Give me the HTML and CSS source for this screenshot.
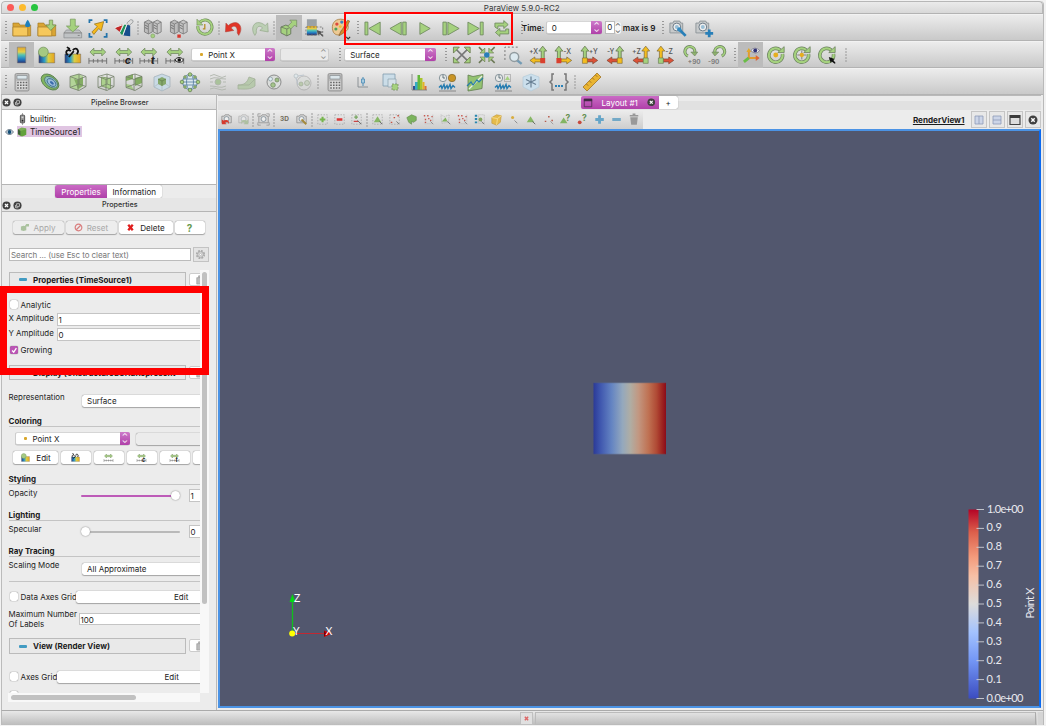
FILE: index.html
```html
<!DOCTYPE html>
<html lang="en">
<head>
<meta charset="utf-8">
<title>ParaView 5.9.0-RC2</title>
<link rel="stylesheet" href="styles.css">
</head>
<body>
<svg class="paints" aria-hidden="true">
<defs>
<linearGradient id="rain" x1="0" y1="0" x2="0" y2="1"><stop offset="0" stop-color="#e0a32a"/><stop offset=".3" stop-color="#e5cf48"/><stop offset=".5" stop-color="#54c3b4"/><stop offset=".75" stop-color="#237fc4"/><stop offset="1" stop-color="#273778"/></linearGradient>
<linearGradient id="rainh" x1="0" y1="0" x2="1" y2="0"><stop offset="0" stop-color="#263b80"/><stop offset=".35" stop-color="#2c9ec9"/><stop offset=".6" stop-color="#d9cf45"/><stop offset="1" stop-color="#e8a21d"/></linearGradient>
</defs>
</svg>
<svg class="defs" aria-hidden="true">
<symbol id="open" viewBox="0 0 26 26"><path d="M4 8h6l1 2h11v11H4z" fill="#d9a534" stroke="#a57b28" stroke-width=".7"/><path d="M4 21V12h15v9z" fill="#f6c85c" stroke="#a57b28" stroke-width=".7"/><path d="M19 4.500c4 5.500 3 7.500 0 7.500s-4-2 0-7.500z" fill="#1e80bd"/></symbol>
<symbol id="load" viewBox="0 0 26 26"><path d="M4 8h6l1 2h11v11H4z" fill="#d9a534" stroke="#a57b28" stroke-width=".7"/><path d="M4 21V12h14v9z" fill="#f6c85c" stroke="#a57b28" stroke-width=".7"/><path d="M15.500 5h3.500v5h3.500L17 15.500 12 10h3.500z" fill="#a5d17e" stroke="#61803f" stroke-width=".6"/></symbol>
<symbol id="save" viewBox="0 0 26 26"><path d="M6.500 15h13l2.500 3v5H4v-5z" fill="#bfc2c4" stroke="#85898b" stroke-width=".7"/><path d="M4 18h18M18 20.600h2" stroke="#777" stroke-width=".8"/><path d="M10.500 4h5v7h4L13 17 6.500 11h4z" fill="#a5d17e" stroke="#719656" stroke-width=".7"/></symbol>
<symbol id="extract" viewBox="0 0 26 26"><path d="M4.500 8V5h3M19 5h3v3M22 18v4h-3M7.500 22h-3v-4" fill="none" stroke="#2373aa" stroke-width="1.800"/><path d="M7 17l5.500-5.500-3-2.500 9.500-2.500L16.500 16 14 13.500 9 19.500z" fill="#f6b91c" stroke="#8f6d17" stroke-width=".7"/></symbol>
<symbol id="catalyst" viewBox="0 0 26 26"><path d="M4 13l8-4-3 8z" fill="#c22727"/><path d="M13 9l2.500 1-4 10.500-2.500-3z" fill="#1f9358"/><path d="M16 10h3.500v11.500l-7-1z" fill="#174e8c"/><path d="M4 12.500l14-5 2 3M9 17.500l4-8M12 20.500l4-10.500" fill="none" stroke="#eee" stroke-width="1"/><path d="M16 8l4-3.500 2 .500.500 2-4 3.500z" fill="#ddd" stroke="#85898b" stroke-width=".7"/></symbol>
<symbol id="rack" viewBox="0 0 26 26"><path d="M4.500 7l4-2 4 2v10l-4 2-4-2z" fill="#bcbcbc" stroke="#747474" stroke-width=".8"/><path d="M13.500 7l4-2 4 2v10l-4 2-4-2z" fill="#c6c6c6" stroke="#747474" stroke-width=".8"/><path d="M4.500 7l4 2 4-2M13.500 7l4 2 4-2M8.500 9v10M17.500 9v10" fill="none" stroke="#777" stroke-width=".8"/><path d="M5 10l3 1.500M5 12.500l3 1.500M14 10l3 1.500M14 12.500l3 1.500" stroke="#555" stroke-width=".7"/></symbol>
<symbol id="connect" viewBox="0 0 26 26"><use href="#rack"/><circle cx="13" cy="21" r="2" fill="#a5d17e" stroke="#789a60" stroke-width=".6"/></symbol>
<symbol id="disconnect" viewBox="0 0 26 26"><use href="#rack"/><path d="M11.500 19.500h3.500V23h-3.500z" fill="#d7382e"/></symbol>
<symbol id="reload" viewBox="0 0 26 26"><path d="M8 7a7.200 7.200 0 1 1-2 4" fill="none" stroke="#6f8c59" stroke-width="3"/><path d="M8 7a7.200 7.200 0 1 1-2 4" fill="none" stroke="#a5d17e" stroke-width="1.800"/><path d="M5 4v6h6z" fill="#a5d17e" stroke="#6f8c59" stroke-width=".6"/><path d="M13 9v5h-2" fill="none" stroke="#b58d24" stroke-width="1.300"/></symbol>
<symbol id="undo" viewBox="0 0 26 26"><path d="M5 8l-.500 9 8.500-1.500-2.800-2.500c3-3.500 7-1.500 6.300 5l1.500 2.500C24 12 17 2.500 7.500 10.500z" fill="#e13427" stroke="#a6433b" stroke-width=".5"/></symbol>
<symbol id="redo" viewBox="0 0 26 26"><path d="M21 8l.500 9-8.500-1.500 2.800-2.500c-3-3.500-7-1.500-6.300 5L8 20.500C2 12 9 2.500 18.500 10.500z" fill="#bccfb4" stroke="#94a88b" stroke-width=".7"/></symbol>
<symbol id="auto" viewBox="0 0 26 26"><path d="M5 12l5-2 5 2v7l-4 2-6-3z" fill="#a5d17e" stroke="#67755e" stroke-width=".9"/><path d="M5 12l6 2 4-2m-4 2v7" fill="none" stroke="#67755e" stroke-width=".8"/><path d="M12 11l4-4-2-2h7v7l-2-2-4 4z" fill="#a5d17e" stroke="#718761" stroke-width=".7"/></symbol>
<symbol id="pick" viewBox="0 0 26 26"><path d="M5 4h10v17H5z" fill="#9aa1a6"/><path d="M5 11h10v9H5z" fill="url(#rain)"/><path d="M4 12h17v8H4z" fill="none" stroke="#686868" stroke-width=".8" stroke-dasharray="2 1.500"/><path d="M15 15l6 2-2 1 3 3-1 1-3-3-2 1z" fill="#555"/></symbol>
<symbol id="palette" viewBox="0 0 26 26"><path d="M13 4C6 4 3 10 5 16c1 4 6 5 7 3s0-5 4-3c7 2 6-12-3-12z" fill="#edc994" stroke="#a5793b" stroke-width=".8"/><circle cx="9" cy="9" r="1.700" fill="#dd493b"/><circle cx="14" cy="7" r="1.700" fill="#4083bc"/><circle cx="8" cy="14" r="1.600" fill="#49a35b"/><circle cx="12.500" cy="11.500" r="1.400" fill="#f0c130"/><path d="M20 5l-7 12-2 4 5-3 6-12z" fill="#d58c2d" stroke="#805928" stroke-width=".6"/><path d="M18.500 22l2 2 2-2" fill="none" stroke="#333" stroke-width="1.200"/></symbol>
<symbol id="first" viewBox="0 0 26 26"><path d="M4 7h3v13H4zM19.500 7v13L8 13.500z" fill="#a5d17e" stroke="#718b62" stroke-width=".9"/></symbol>
<symbol id="prev" viewBox="0 0 26 26"><path d="M15.500 7v13L4 13.500zM17 7h3.500v13H17z" fill="#a5d17e" stroke="#718b62" stroke-width=".9"/></symbol>
<symbol id="play" viewBox="0 0 26 26"><path d="M8 7.500l10.500 6L8 19.500z" fill="#a5d17e" stroke="#718b62" stroke-width=".9"/></symbol>
<symbol id="next" viewBox="0 0 26 26"><path d="M5 7h3.500v13H5zM10 7l11.500 6.500L10 20z" fill="#a5d17e" stroke="#718b62" stroke-width=".9"/></symbol>
<symbol id="last" viewBox="0 0 26 26"><path d="M5 7l11.500 6.500L5 20zM17.500 7h3v13h-3z" fill="#a5d17e" stroke="#718b62" stroke-width=".9"/></symbol>
<symbol id="loop" viewBox="0 0 26 26"><path d="M6 12V8h9V5.500l4.500 4-4.500 4V11H9v3zM20 14v5h-9v2.500l-4.500-4 4.500-4V16h6v-2z" fill="#a5d17e" stroke="#718b62" stroke-width=".9"/></symbol>
<symbol id="camera" viewBox="0 0 26 26"><path d="M5 8h3l1-2h6l1 2h2v10H5z" fill="#c7cacb" stroke="#90979b" stroke-width="1"/><circle cx="12" cy="12" r="4" fill="#eee" stroke="#6c7b87" stroke-width="1"/><circle cx="12" cy="12" r="2" fill="#99bfd6"/></symbol>
<symbol id="camtool" viewBox="0 0 26 26"><use href="#camera"/><path d="M14 14l7 7" stroke="#287fb8" stroke-width="2.800"/><circle cx="14.500" cy="14.500" r="2.200" fill="#358ac0"/></symbol>
<symbol id="camplus" viewBox="0 0 26 26"><use href="#camera"/><path d="M14.500 18.500h8M18.500 14.500v8" stroke="#287fb8" stroke-width="2.800"/></symbol>
<symbol id="legend" viewBox="0 0 26 26"><path d="M8.500 5h8.500v16H8.500z" fill="url(#rain)" stroke="#777" stroke-width=".6"/></symbol>
<symbol id="editmap" viewBox="0 0 26 26"><path d="M5 11h16v10H5z" fill="url(#rainh)" stroke="#666" stroke-width=".5"/><circle cx="9.500" cy="10" r="5" fill="#a5c982" stroke="#6d8d58" stroke-width=".7"/></symbol>
<symbol id="sepmap" viewBox="0 0 26 26"><path d="M5 12h16v9H5z" fill="url(#rainh)" stroke="#666" stroke-width=".5"/><path d="M8 13c-4-3 0-7 3-4m2-1c4-4 7 1 4 4M9 15l5-6M7 5l3 2" fill="none" stroke="#111" stroke-width="1.800"/></symbol>
<symbol id="range" viewBox="0 0 26 26"><path d="M5 10l4-4v2.500h8V6l4 4-4 4v-2.500H9V14z" fill="#a5d17e" stroke="#708761" stroke-width=".8"/><path d="M4 19h18M4 16v6M8.500 17v4M13 17v4M17.500 17v4M22 16v6" stroke="#686868" stroke-width=".9"/></symbol>
<symbol id="rangec" viewBox="0 0 26 26"><use href="#range"/><text x="14" y="22" class="glyph">c</text></symbol>
<symbol id="ranget" viewBox="0 0 26 26"><use href="#range"/><text x="15" y="22" class="glyph">t</text></symbol>
<symbol id="rangev" viewBox="0 0 26 26"><use href="#range"/><path d="M13 18q4-5 9 0-4 5-9 0z" fill="#eee" stroke="#222"/><circle cx="17.500" cy="18" r="1.800" fill="#111"/></symbol>
<symbol id="fit" viewBox="0 0 26 26"><path d="M7 7l12 12M19 7L7 19" stroke="#777" stroke-width="1.600"/><path d="M4.500 5h6l-6 6zM21.500 5v6l-6-6zM4.500 21v-6l6 6zM21.500 21h-6l6-6z" fill="#a5d17e" stroke="#65744b" stroke-width=".8"/></symbol>
<symbol id="fitdata" viewBox="0 0 26 26"><path d="M5 5l5 5M21 5l-5 5M5 21l5-5M21 21l-5-5" stroke="#6b7855" stroke-width="1.600"/><path d="M11 6v5H6zM15 6v5h5zM6 15h5v5zM20 15h-5v5z" fill="#a5d17e" stroke="#65744b" stroke-width=".6"/><circle cx="13" cy="13" r="2.800" fill="#287fb8"/></symbol>
<symbol id="zoombox" viewBox="0 0 26 26"><path d="M5 18V5h14" fill="none" stroke="#777" stroke-dasharray="2 2"/><path d="M17 18l5 4" stroke="#739bb4" stroke-width="2.500"/><circle cx="14.500" cy="15" r="4.500" fill="#dce9ef" stroke="#919b9f" stroke-width="1.500"/></symbol>
<symbol id="upgreen" viewBox="0 0 26 26"><path d="M16.500 17V9H14L18 4l4 5h-2.500v8z" fill="#a5d17e" stroke="#61744d" stroke-width=".8"/></symbol>
<symbol id="px" viewBox="0 0 26 26"><use href="#upgreen"/><path d="M16 17v3h-6v2l-5-3.500L10 15v2z" fill="#f3bd20" stroke="#7b6632" stroke-width=".7"/><path d="M15.500 16h5v5.500h-5z" fill="#d9402e"/><text x="4" y="12" class="ax">+X</text></symbol>
<symbol id="mx" viewBox="0 0 26 26"><use href="#upgreen" x="-10"/><path d="M10 17h6v-2l5 3.500-5 3.500v-2h-6z" fill="#f3bd20" stroke="#7b6632" stroke-width=".7"/><path d="M5.500 16h5v5.500h-5z" fill="#d9402e"/><text x="12.500" y="12" class="ax">-X</text></symbol>
<symbol id="py" viewBox="0 0 26 26"><use href="#upgreen" x="-10"/><path d="M10 17h6v-2l5 3.500-5 3.500v-2h-6z" fill="#dc5137" stroke="#7b4632" stroke-width=".7"/><path d="M5.500 16h5v5.500h-5z" fill="#f3bd20" stroke="#7b6632" stroke-width=".6"/><text x="12" y="12" class="ax">+Y</text></symbol>
<symbol id="my" viewBox="0 0 26 26"><use href="#upgreen"/><path d="M16 17v3h-6v2l-5-3.500L10 15v2z" fill="#dc5137" stroke="#7b4632" stroke-width=".7"/><path d="M15.500 16h5v5.500h-5z" fill="#f3bd20" stroke="#7b6632" stroke-width=".6"/><text x="5" y="12" class="ax">-Y</text></symbol>
<symbol id="pz" viewBox="0 0 26 26"><path d="M16.500 17V9H14L18 4l4 5h-2.500v8z" fill="#f3bd20" stroke="#7b6632" stroke-width=".7"/><path d="M16 17v3h-6v2l-5-3.500L10 15v2z" fill="#dc5137" stroke="#7b4632" stroke-width=".7"/><path d="M15.500 16h5v5.500h-5z" fill="#a5d17e" stroke="#61744d" stroke-width=".6"/><text x="4" y="12" class="ax">+Z</text></symbol>
<symbol id="mz" viewBox="0 0 26 26"><path d="M6.500 17V9H4L8 4l4 5H9.500v8z" fill="#f3bd20" stroke="#7b6632" stroke-width=".7"/><path d="M10 17h6v-2l5 3.500-5 3.500v-2h-6z" fill="#dc5137" stroke="#7b4632" stroke-width=".7"/><path d="M5.500 16h5v5.500h-5z" fill="#a5d17e" stroke="#61744d" stroke-width=".6"/><text x="12.500" y="12" class="ax">-Z</text></symbol>
<symbol id="r90" viewBox="0 0 26 26"><path d="M9 14a5 5 0 1 1 7-4" fill="none" stroke="#6b8060" stroke-width="3.200"/><path d="M9 14a5 5 0 1 1 7-4" fill="none" stroke="#a5d17e" stroke-width="1.800"/><path d="M12 10h7l-3 4z" fill="#8eb16d" stroke="#6b8060" stroke-width=".6"/><text x="9" y="22" class="deg">+90</text></symbol>
<symbol id="l90" viewBox="0 0 26 26"><path d="M17 14a5 5 0 1 0-7-4" fill="none" stroke="#6b8060" stroke-width="3.200"/><path d="M17 14a5 5 0 1 0-7-4" fill="none" stroke="#a5d17e" stroke-width="1.800"/><path d="M14 10H7l3 4z" fill="#8eb16d" stroke="#6b8060" stroke-width=".6"/><text x="3" y="22" class="deg">-90</text></symbol>
<symbol id="orient" viewBox="0 0 26 26"><path d="M11 8v8h9" fill="none" stroke="#e19a2d" stroke-width="2"/><path d="M8.500 10L11 6l2.500 4z" fill="#e1a82d"/><path d="M18 13l4 3-4 3z" fill="#df6435"/><path d="M11 16l-5 4" stroke="#6abd47" stroke-width="3"/><path d="M13 8.500q4-5 9 0-4 5-9 0z" fill="#eee" stroke="#64627d" stroke-width=".7"/><circle cx="17.500" cy="8.500" r="2" fill="#303275"/></symbol>
<symbol id="ring" viewBox="0 0 26 26"><path d="M17.500 8a7 7 0 1 0 2.300 4" fill="none" stroke="#6b8060" stroke-width="3.600"/><path d="M17.500 8a7 7 0 1 0 2.300 4" fill="none" stroke="#a5d17e" stroke-width="2.200"/><path d="M15 10.500h6.500V4.500z" fill="#a5d17e" stroke="#6b8060" stroke-width=".8"/></symbol>
<symbol id="center" viewBox="0 0 26 26"><use href="#ring"/><circle cx="13" cy="13" r="2.500" fill="#e6ae20"/></symbol>
<symbol id="recenter" viewBox="0 0 26 26"><use href="#ring"/><path d="M8.500 13h9M13 8.500v9" stroke="#777" stroke-width=".9"/><circle cx="13" cy="13" r="2.200" fill="#e6ae20"/></symbol>
<symbol id="pickcenter" viewBox="0 0 26 26"><use href="#ring"/><path d="M15 15l6 2-1.500 1 2.500 3-1 1-3-2.500-1 1.500z" fill="#111"/></symbol>
<symbol id="calc" viewBox="0 0 26 26"><rect x="6" y="4.500" width="14" height="17.500" rx="1.500" fill="#bbb" stroke="#8a8a8a" stroke-width=".8"/><path d="M8 6.500h10V10H8z" fill="#dbe6eb" stroke="#7d8588" stroke-width=".6"/><path d="M7.500 12h11v8.500h-11z" fill="#ddd"/><path d="M8.200 13.500h10M8.200 16.200h10M8.200 19h10" stroke="#666" stroke-width="1.500" stroke-dasharray="1.600 1.200"/></symbol>
<symbol id="contour" viewBox="0 0 26 26"><g transform="rotate(38 13 13)"><ellipse cx="13" cy="13" rx="10" ry="6.500" fill="#82b55f" stroke="#52784a" stroke-width=".8"/><ellipse cx="14" cy="12.500" rx="7.500" ry="4.600" fill="#8dbdbf" stroke="#54796d" stroke-width=".8"/><ellipse cx="14.500" cy="12.500" rx="5" ry="3" fill="#9cbcda" stroke="#34668e" stroke-width=".8"/><ellipse cx="15" cy="12.500" rx="2.300" ry="1.200" fill="#3a6cac"/></g></symbol>
<symbol id="wire" viewBox="0 0 26 26"><path d="M5 7.500l9-2.500 7 2.500v10L14 21.500l-9-3zM5 7.500l8 3 8-3M13 10.500v11M14 5v10l-9 3.500m9-3.500l7 2.500" fill="none" stroke="#748069" stroke-width=".8"/></symbol>
<symbol id="clip" viewBox="0 0 26 26"><path d="M5 7.500l8-2.500 5 2v10l-5 4.500-8-3z" fill="#b3d498"/><path d="M9 10l4 1 5-3v9l-5 3z" fill="#84ad63"/><use href="#wire"/></symbol>
<symbol id="slice" viewBox="0 0 26 26"><path d="M8.500 8l9 1.500v10.500l-9-3z" fill="#acd18d" stroke="#708c58" stroke-width=".7"/><use href="#wire"/></symbol>
<symbol id="thresh" viewBox="0 0 26 26"><path d="M5 8l7-3v5l-7 2zM14 9l7-2v7l-7 3z" fill="#84ad63"/><path d="M5 15l5 1 3 5-8-3z" fill="#a5c987"/><use href="#wire"/></symbol>
<symbol id="subset" viewBox="0 0 26 26"><path d="M5 8l8-3 8 3v10l-8 4-8-4z" fill="#c9dae5" stroke="#a5b3bb" stroke-width=".8"/><path d="M9 10l4-2 4 2v5l-4 2-4-2z" fill="#85a86c"/><path d="M9 10l4 2 4-2M13 12v5" fill="none" stroke="#5c7b48" stroke-width=".7"/><path d="M13 17v5M5 18l4-3M21 18l-4-3" fill="none" stroke="#b1bec5" stroke-width=".8"/></symbol>
<symbol id="glyphs" viewBox="0 0 26 26"><circle cx="13" cy="13" r="7.500" fill="#dce9ef" stroke="#537b9f" stroke-width=".8"/><ellipse cx="13" cy="13" rx="3.500" ry="7.500" fill="none" stroke="#537b9f" stroke-width=".8"/><path d="M6 10h14M6 16h14M4 13h18" stroke="#537b9f" stroke-width=".8"/><g fill="#a5d17e" stroke="#5e784c" stroke-width=".7"><circle cx="13" cy="5.500" r="1.800"/><circle cx="13" cy="21" r="1.800"/><circle cx="5" cy="13" r="1.800"/><circle cx="21" cy="13" r="1.800"/><circle cx="8" cy="8" r="1.300"/><circle cx="18" cy="8" r="1.300"/><circle cx="8" cy="18" r="1.300"/><circle cx="18" cy="18" r="1.300"/></g></symbol>
<symbol id="stream" viewBox="0 0 26 26"><g fill="none" stroke="#b0b6ad" stroke-width=".9"><path d="M5 7q4-3 8 0t8 0M5 10q4-2 8-1t8 1M5 17q4 0 8 1t8-1M5 20q4-2 8 0t8 0M5 13h3m10 0h3"/><circle cx="13" cy="13" r="3" fill="#a9c29a"/></g></symbol>
<symbol id="warp" viewBox="0 0 26 26"><path d="M5 16c6 0 9-2 11-8l6 2v7c-5 4-10 3-17 3z" fill="#b7c9ac" stroke="#a3b19a" stroke-width=".8"/><path d="M5 16h11l6-6" fill="none" stroke="#a3b19a" stroke-width=".8"/></symbol>
<symbol id="group" viewBox="0 0 26 26"><circle cx="13" cy="13" r="7" fill="#dadddb" stroke="#777" stroke-width=".8"/><circle cx="9.500" cy="10" r="2" fill="#dcebf1" stroke="#83939b" stroke-width=".7"/><circle cx="16" cy="11" r="2" fill="#9dbd84" stroke="#6d845e" stroke-width=".7"/><circle cx="12" cy="16" r="2.300" fill="#a5c58c" stroke="#6d845e" stroke-width=".7"/></symbol>
<symbol id="level" viewBox="0 0 26 26"><g opacity=".5"><circle cx="15" cy="14" r="7" fill="#dadddb" stroke="#888" stroke-width=".8"/><circle cx="7" cy="7" r="2" fill="#dcebf1" stroke="#83939b" stroke-width=".7"/><path d="M9 7l6-1M7 9l2 7" stroke="#9ab"/><circle cx="12" cy="15" r="2" fill="#9dbd84" stroke="#6d845e" stroke-width=".7"/><circle cx="18" cy="14" r="2.500" fill="#b7c8ab" stroke="#6d845e" stroke-width=".7"/></g></symbol>
<symbol id="box" viewBox="0 0 26 26"><path d="M8 8v10h10" fill="none" stroke="#858a8e" stroke-width=".9"/><path d="M13 8v9" stroke="#4b8cb5"/><path d="M11.500 10h3v4h-3z" fill="#a6cbe0" stroke="#4b8cb5" stroke-width=".8"/></symbol>
<symbol id="selx" viewBox="0 0 26 26"><path d="M5 5h12v12H5z" fill="#cbdde8" stroke="#829dad" stroke-width=".8"/><path d="M10 10h8v8h-8z" fill="#d6e1e8" stroke="#8ba0ad" stroke-width=".7"/><path d="M14 15h6v6h-6z" fill="#a5d17e" stroke="#70845e" stroke-width=".7" stroke-dasharray="2 1"/></symbol>
<symbol id="hist" viewBox="0 0 26 26"><path d="M7 17h3v4H7z" fill="#324e91"/><path d="M9 13h3v8H9z" fill="#35a9c4"/><path d="M11.500 6H14v15h-2.500z" fill="#64b83c"/><path d="M14 9h2.500v12H14z" fill="#a7c52c"/><path d="M16.500 13h2v8h-2z" fill="#e5b325"/><path d="M18.500 17h2v4h-2z" fill="#db7436"/><path d="M6 5v16h15" fill="none" stroke="#777" stroke-width=".8"/></symbol>
<symbol id="wave" viewBox="0 0 26 26"><path d="M5 18.500l2-2 1 3 2-4 1 4 2-3 1 3 2-4 1 4 2-3 2 2" fill="none" stroke="#247bb0" stroke-width="1.400"/><path d="M5 22h17" stroke="#777" stroke-width=".8"/></symbol>
<symbol id="plott" viewBox="0 0 26 26"><use href="#wave"/><circle cx="9" cy="9" r="3.700" fill="#e7e9e8" stroke="#71818a" stroke-width=".8"/><path d="M9 6v3h2" fill="none" stroke="#475b67" stroke-width=".8"/><circle cx="18" cy="9" r="3.700" fill="#c99425" stroke="#7e652b" stroke-width=".7"/></symbol>
<symbol id="plotline" viewBox="0 0 26 26"><path d="M6 6l5 1.500 10-2-1 14-5 1-9 1.500z" fill="#93c271" stroke="#627f51" stroke-width=".8"/><path d="M7 20L20 7" stroke="#e8efe5" stroke-width="1.200"/><path d="M5 17l4-4 2 3 4-5 2 2 4-4" fill="none" stroke="#287ca8" stroke-width="1.200"/></symbol>
<symbol id="plotsel" viewBox="0 0 26 26"><use href="#wave"/><circle cx="9" cy="9" r="3.700" fill="#e7e9e8" stroke="#71818a" stroke-width=".8"/><path d="M9 6v3h2" fill="none" stroke="#475b67" stroke-width=".8"/><path d="M14.500 5.500h6v7h-6z" fill="none" stroke="#777" stroke-width=".8" stroke-dasharray="1 1"/><path d="M15 11l2.500-4 2.500 4z" fill="#a5d17e"/></symbol>
<symbol id="flake" viewBox="0 0 26 26"><path d="M5 8l8-3 8 3v10l-8 4-8-4z" fill="#cbdfec" stroke="#adc8d7" stroke-width=".6"/><path d="M13 7.500v11M8 10.500l10 5M8 15.500l10-5" stroke="#688094" stroke-width="1.200"/></symbol>
<symbol id="prog" viewBox="0 0 26 26"><path d="M8 5H6v6l-2 2 2 2v6h2M18 5h2v6l2 2-2 2v6h-2" fill="none" stroke="#777" stroke-width="1.500"/><path d="M9 17h8" stroke="#2981b7" stroke-width="2" stroke-dasharray="2 1"/></symbol>
<symbol id="ruler" viewBox="0 0 26 26"><path d="M4 18L18 4l4 4L8 22z" fill="#e9b432" stroke="#a27525" stroke-width=".8"/><path d="M7.500 15l1.700 1.700M10.500 12l1.700 1.700M13.500 9l1.700 1.700M16.500 6l1.700 1.700" stroke="#91631b" stroke-width=".8"/></symbol>
<symbol id="vcam" viewBox="0 0 18 18"><path d="M4 5.500h2.500l1-1.500h4l1 1.500H14v7H4z" fill="#d5d5d5" stroke="#8c8c8c" stroke-width=".8"/><circle cx="9" cy="8.500" r="2.600" fill="#eee" stroke="#788892" stroke-width=".8"/></symbol>
<symbol id="vundo" viewBox="0 0 18 18"><use href="#vcam"/><path d="M4 9v5h5l-1.500-1.500q3-2 4 1.500 1-6-6-4z" fill="#d63a2d"/></symbol>
<symbol id="vredo" viewBox="0 0 18 18"><g opacity=".5"><use href="#vcam"/><path d="M14 9v5H9l1.500-1.500q-3-2-4 1.500-1-6 6-4z" fill="#85a96d"/></g></symbol>
<symbol id="vcap" viewBox="0 0 18 18"><use href="#vcam"/><path d="M3 6V3h3m6 0h3v3m0 6v3h-3m-6 0H3v-3" fill="none" stroke="#888" stroke-width=".7"/></symbol>
<symbol id="vadj" viewBox="0 0 18 18"><use href="#vcam"/><path d="M9 9l5 5" stroke="#a58a3b" stroke-width="2"/></symbol>
<symbol id="dash" viewBox="0 0 18 18"><path d="M4 4h10v10H4z" fill="none" stroke="#999" stroke-width=".7" stroke-dasharray="1.500 1.500"/></symbol>
<symbol id="sadd" viewBox="0 0 18 18"><use href="#dash"/><path d="M9 6v6M6 9h6" stroke="#77b54e" stroke-width="2.200"/></symbol>
<symbol id="ssub" viewBox="0 0 18 18"><use href="#dash"/><path d="M6 9h6" stroke="#d33" stroke-width="2.400"/></symbol>
<symbol id="stog" viewBox="0 0 18 18"><use href="#dash"/><path d="M8.500 4.500v4M6.500 6.500h4" stroke="#79a764" stroke-width="1.500"/><path d="M6 11h5" stroke="#c44" stroke-width="1.500"/><path d="M10 10l4 4" stroke="#666"/></symbol>
<symbol id="tri" viewBox="0 0 18 18"><path d="M5 12l4-6.500L13 12z" fill="#86b764"/><path d="M11 11l3 3" stroke="#666"/></symbol>
<symbol id="stri" viewBox="0 0 18 18"><use href="#dash"/><use href="#tri"/></symbol>
<symbol id="spts" viewBox="0 0 18 18"><use href="#dash"/><path d="M5 12h1.600M8 7h1.600M12 5h1.600" stroke="#c65142" stroke-width="1.500"/><path d="M11 11l3 3" stroke="#777"/></symbol>
<symbol id="frus" viewBox="0 0 18 18"><path d="M4 7l5-3 5 2v4l-3 2-2-1v3l-3-2z" fill="#7cb45d" stroke="#61854b" stroke-width=".6"/></symbol>
<symbol id="rpts" viewBox="0 0 18 18"><path d="M4 5h1.500m2 0h1.500m-4 4h1.500m2-1h1.500m-5 4h1.500m4-2h1.500m0-4h1.500" stroke="#c65950" stroke-width="1.400"/><path d="M5 13.500h7M13.500 4v8" stroke="#aaa" stroke-width=".7" stroke-dasharray="1 1"/><path d="M11 11l3 3" stroke="#888"/></symbol>
<symbol id="poly" viewBox="0 0 18 18"><path d="M4 4l4 2 5-2-1 8-7 1z" fill="none" stroke="#aaa" stroke-width=".8" stroke-dasharray="1 1"/><path d="M5 11l4-4 2 4z" fill="#82b45f"/><path d="M11 11l3 3" stroke="#777"/></symbol>
<symbol id="inter" viewBox="0 0 18 18"><path d="M4 5h2.500M4 8.500h2.500M4 12h2.500" stroke="#2986ad" stroke-width="2"/><path d="M8 4h6v9H8z" fill="none" stroke="#aaa" stroke-width=".8" stroke-dasharray="1 1"/><circle cx="10" cy="9" r="2" fill="#83a65e"/><path d="M11 11l3 3" stroke="#777"/></symbol>
<symbol id="cube" viewBox="0 0 18 18"><path d="M4 7l5-3 5 1-1 7-4 3-5-2z" fill="#e5bb4b" stroke="#bd9539" stroke-width=".6"/><path d="M4 7l6 1 4-3M10 8l-1 7" fill="none" stroke="#f5dc8f"/></symbol>
<symbol id="hpt" viewBox="0 0 18 18"><circle cx="8" cy="7" r="1.600" fill="#d8ad3f"/><path d="M10 10l3 3" stroke="#888"/></symbol>
<symbol id="dots3" viewBox="0 0 18 18"><path d="M5 11h1.600M8.500 6h1.600M12 10h1.600" stroke="#b65b4c" stroke-width="1.500"/><path d="M11 11l3 3" stroke="#999"/></symbol>
<symbol id="triq" viewBox="0 0 18 18"><path d="M3 13l4-6 4 6z" fill="#83b563"/><text x="9" y="11" class="q">?</text></symbol>
<symbol id="ptq" viewBox="0 0 18 18"><circle cx="6" cy="12" r="2" fill="#c64a3d"/><text x="8.500" y="11" class="q">?</text></symbol>
<symbol id="plus" viewBox="0 0 18 18"><path d="M9 4.500v9M4.500 9h9" stroke="#65a5c8" stroke-width="3"/></symbol>
<symbol id="minus" viewBox="0 0 18 18"><path d="M4.500 9h9" stroke="#73a9c7" stroke-width="3"/></symbol>
<symbol id="trash" viewBox="0 0 18 18"><path d="M5.500 6.500h8l-1 8h-6z" fill="#999"/><path d="M5 5h9M8 3.500h3" stroke="#999" stroke-width="1.500"/></symbol>
<symbol id="closer" viewBox="0 0 10 10"><circle cx="5" cy="5" r="4.500" fill="#414141"/><path d="M3.300 3.300l3.400 3.400M6.700 3.300L3.300 6.700" stroke="#fff" stroke-width="1.400"/></symbol>
<symbol id="floater" viewBox="0 0 10 10"><circle cx="5" cy="5" r="4.500" fill="#414141"/><path d="M4 3h3.200v3H4zM2.800 4.500v3H6" fill="none" stroke="#ddd" stroke-width=".8"/></symbol>
<symbol id="copy" viewBox="0 0 12 12"><path d="M3 4h6v7H3zM5 4V2h3l2 2v5H9" fill="#bbb" stroke="#999" stroke-width=".7"/></symbol>
</svg>

<main class="window">
  <header class="title"><span class="light red"></span><span class="light yellow"></span><span class="light green"></span><h1>ParaView 5.9.0-RC2</h1></header>

  <nav class="bar">
    <span class="sep wide"></span>
    <svg class="ic"><use href="#open"/></svg><svg class="ic"><use href="#load"/></svg><svg class="ic"><use href="#save"/></svg><svg class="ic"><use href="#extract"/></svg><svg class="ic"><use href="#catalyst"/></svg>
    <span class="sep"></span>
    <svg class="ic"><use href="#connect"/></svg><svg class="ic"><use href="#disconnect"/></svg><svg class="ic"><use href="#reload"/></svg>
    <span class="sep"></span>
    <svg class="ic"><use href="#undo"/></svg><svg class="ic"><use href="#redo"/></svg>
    <span class="sep"></span>
    <svg class="ic on"><use href="#auto"/></svg><svg class="ic"><use href="#pick"/></svg><svg class="ic"><use href="#palette"/></svg>
    <span class="sep wide"></span>
    <svg class="ic"><use href="#first"/></svg><svg class="ic"><use href="#prev"/></svg><svg class="ic"><use href="#play"/></svg><svg class="ic"><use href="#next"/></svg><svg class="ic"><use href="#last"/></svg><svg class="ic"><use href="#loop"/></svg>
    <span class="sep wide time-sep"></span>
    <span class="strong time-label">Time:</span>
    <span class="combo time">0<i class="knob"></i></span>
    <span class="frame">0</span><i class="step"></i>
    <span class="strong max">max is 9</span>
    <span class="sep wide"></span>
    <svg class="ic"><use href="#camtool"/></svg><svg class="ic"><use href="#camplus"/></svg>
  </nav>

  <nav class="bar">
    <span class="sep wide"></span>
    <svg class="ic on"><use href="#legend"/></svg><svg class="ic"><use href="#editmap"/></svg><svg class="ic"><use href="#sepmap"/></svg><svg class="ic"><use href="#range"/></svg><svg class="ic"><use href="#rangec"/></svg><svg class="ic"><use href="#ranget"/></svg><svg class="ic"><use href="#rangev"/></svg>
    <span class="combo array"><b class="dot"></b>Point X<i class="knob"></i></span>
    <span class="combo comp off"><i class="knob"></i></span>
    <span class="sep wide"></span>
    <span class="combo repr">Surface<i class="knob"></i></span>
    <span class="sep wide repr-sep"></span>
    <svg class="ic"><use href="#fit"/></svg><svg class="ic"><use href="#fitdata"/></svg><svg class="ic"><use href="#zoombox"/></svg><svg class="ic"><use href="#px"/></svg><svg class="ic"><use href="#mx"/></svg><svg class="ic"><use href="#py"/></svg><svg class="ic"><use href="#my"/></svg><svg class="ic"><use href="#pz"/></svg><svg class="ic"><use href="#mz"/></svg><svg class="ic"><use href="#r90"/></svg><svg class="ic"><use href="#l90"/></svg>
    <span class="sep wide"></span>
    <svg class="ic on"><use href="#orient"/></svg><svg class="ic"><use href="#center"/></svg><svg class="ic"><use href="#recenter"/></svg><svg class="ic"><use href="#pickcenter"/></svg>
    <span class="sep end"></span>
  </nav>

  <nav class="bar filters">
    <span class="sep wide"></span>
    <svg class="ic"><use href="#calc"/></svg><svg class="ic"><use href="#contour"/></svg><svg class="ic"><use href="#clip"/></svg><svg class="ic"><use href="#slice"/></svg><svg class="ic"><use href="#thresh"/></svg><svg class="ic"><use href="#subset"/></svg><svg class="ic"><use href="#glyphs"/></svg><svg class="ic"><use href="#stream"/></svg><svg class="ic"><use href="#warp"/></svg><svg class="ic"><use href="#group"/></svg><svg class="ic"><use href="#level"/></svg>
    <span class="sep"></span>
    <svg class="ic"><use href="#calc"/></svg><svg class="ic"><use href="#box"/></svg><svg class="ic"><use href="#selx"/></svg><svg class="ic"><use href="#hist"/></svg><svg class="ic"><use href="#plott"/></svg><svg class="ic"><use href="#plotline"/></svg><svg class="ic"><use href="#plotsel"/></svg><svg class="ic"><use href="#flake"/></svg><svg class="ic"><use href="#prog"/></svg>
    <span class="sep"></span>
    <svg class="ic"><use href="#ruler"/></svg>
  </nav>

  <div class="body">
    <aside class="side">
      <div class="dock"><svg><use href="#closer"/></svg><svg><use href="#floater"/></svg><h2>Pipeline Browser</h2></div>
      <div class="tree">
        <div class="node"><svg class="eye"></svg><svg class="nic" viewBox="0 0 12 14"><path d="M6 0v14" stroke="#999"/><rect x="3.500" y="2.500" width="5" height="9" rx="1" fill="#999" stroke="#444"/><path d="M5 5h2" stroke="#eee"/><circle cx="6" cy="9" r="1" fill="#222"/></svg><span class="name">builtin:</span></div>
        <div class="node"><svg class="eye" viewBox="0 0 9 8"><path d="M.5 4q4-5 8 0-4 5-8 0z" fill="#fff" stroke="#567"/><circle cx="4.500" cy="4" r="2" fill="#124c75"/></svg><span class="picked"><svg class="nic" viewBox="0 0 12 12"><path d="M1 3l4-2 5 1v7l-4 2-5-2z" fill="#7cae58"/><path d="M1 3l3 2v5l-3-2z" fill="#3d5f35"/><path d="M4 5l6-2v6l-6 2z" fill="#63a13c"/></svg><span class="name">TimeSource1</span></span></div>
      </div>
      <div class="tabs"><span class="tab active">Properties</span><span class="tab">Information</span></div>
      <div class="dock second"><svg><use href="#closer"/></svg><svg><use href="#floater"/></svg><h2>Properties</h2></div>
      <div class="actions">
        <span class="btn dim"><svg viewBox="0 0 10 10"><path d="M1 4l3-1 3 1v4L4 9 1 8zM5 4l2-3h3v3z" fill="#7fa66b"/></svg>Apply</span>
        <span class="btn dim"><svg viewBox="0 0 10 10"><circle cx="5" cy="5" r="3.700" fill="none" stroke="#c33" stroke-width="1.300"/><path d="M2.500 7.500l5-5" stroke="#c33" stroke-width="1.300"/></svg>Reset</span>
        <span class="btn del"><svg viewBox="0 0 10 10"><path d="M2.500 2l5 6M7.500 2l-5 6" stroke="#e01e1e" stroke-width="2.600"/></svg>Delete</span>
        <span class="btn help">?</span>
      </div>
      <div class="search"><span class="field">Search ... (use Esc to clear text)</span><span class="gear"><svg viewBox="0 0 12 12"><circle cx="6" cy="6" r="4" fill="none" stroke="#aaa" stroke-width="2" stroke-dasharray="2 1.140"/><circle cx="6" cy="6" r="3" fill="#e5e5e5" stroke="#aaa" stroke-width="1"/><circle cx="6" cy="6" r="1.200" fill="#fff" stroke="#aaa" stroke-width=".7"/></svg></span></div>
      <div class="scroller">
        <div class="props">
          <div class="group"><span class="ghead"><i></i>Properties (TimeSource1)</span><span class="gbtn"><svg><use href="#copy"/></svg></span></div>
          <div class="row analytic"><i class="check"></i>Analytic</div>
          <div class="row xamp"><span class="lab amp">X Amplitude</span><span class="input">1</span></div>
          <div class="row yamp"><span class="lab amp">Y Amplitude</span><span class="input">0</span></div>
          <div class="row growing"><i class="check ticked"><svg viewBox="0 0 8 8"><path d="M2 4.200l1.500 1.600L6 2" fill="none" stroke="#fff" stroke-width="1.200"/></svg></i>Growing</div>
          <div class="group display"><span class="ghead"><i></i>Display (UnstructuredGridRepresent</span><span class="gbtn"><svg><use href="#copy"/></svg></span></div>
          <div class="row reprrow"><span class="lab raised">Representation</span><span class="drop">Surface</span></div>
          <h3 class="coloring">Coloring</h3>
          <div class="row colorrow"><span class="combo cvar"><b class="dot"></b>Point X<i class="knob"></i></span><span class="drop off"></span></div>
          <div class="row mapbtns"><span class="btn edit"><svg><use href="#editmap"/></svg>Edit</span><span class="btn"><svg><use href="#sepmap"/></svg></span><span class="btn"><svg><use href="#range"/></svg></span><span class="btn"><svg><use href="#rangec"/></svg></span><span class="btn"><svg><use href="#ranget"/></svg></span><span class="btn"></span></div>
          <h3 class="styling">Styling</h3>
          <div class="row slide"><span class="lab">Opacity</span><span class="slider full"><i></i></span><span class="input">1</span></div>
          <h3>Lighting</h3>
          <div class="row slide"><span class="lab">Specular</span><span class="slider"><i></i></span><span class="input">0</span></div>
          <h3>Ray Tracing</h3>
          <div class="row scaling"><span class="lab raised">Scaling Mode</span><span class="drop">All Approximate</span></div>
          <hr>
          <div class="row axes"><i class="check"></i><span class="data-lab">Data Axes Grid</span><span class="wbtn data">Edit</span></div>
          <div class="row labels"><span class="lab">Maximum Number<br>Of Labels</span><span class="input">100</span></div>
          <div class="group view"><span class="ghead"><i></i>View (Render View)</span><span class="gbtn"><svg><use href="#copy"/></svg></span></div>
          <div class="row axes2"><i class="check"></i><span class="axes-lab">Axes Grid</span><span class="wbtn">Edit</span></div>
          <div class="row cut"><i class="check"></i></div>
        </div>
        <div class="vbar"><i></i></div>
        <div class="hbar"><i></i></div>
      </div>
    </aside>

    <section class="stage">
      <div class="layouts"><span class="ltab"><svg class="win" viewBox="0 0 12 12"><path d="M1.500 1.500h9v9h-9z" fill="none" stroke="#512f54"/><path d="M1 1h10v3H1z" fill="#402b44"/></svg>Layout #1<svg class="x"><use href="#closer"/></svg></span><span class="addtab">+</span></div>
      <div class="vtools">
        <div class="vset">
          <svg><use href="#vundo"/></svg><svg><use href="#vredo"/></svg><span class="sep"></span><svg><use href="#vcap"/></svg><span class="sep"></span><span class="three">3D</span><svg><use href="#vadj"/></svg><span class="sep"></span><svg><use href="#sadd"/></svg><svg><use href="#ssub"/></svg><svg><use href="#stog"/></svg><span class="sep"></span><svg><use href="#stri"/></svg><svg><use href="#spts"/></svg><svg><use href="#frus"/></svg><svg><use href="#rpts"/></svg><svg><use href="#poly"/></svg><svg><use href="#rpts"/></svg><svg><use href="#inter"/></svg><svg><use href="#cube"/></svg><svg><use href="#hpt"/></svg><svg><use href="#tri"/></svg><svg><use href="#dots3"/></svg><svg><use href="#triq"/></svg><svg><use href="#ptq"/></svg><svg><use href="#plus"/></svg><svg><use href="#minus"/></svg><svg><use href="#trash"/></svg>
        </div>
        <span class="vname">RenderView1</span>
        <div class="vbtns">
          <span><svg viewBox="0 0 12 12"><path d="M2 2h8v8H2zM6 2v8" fill="#ccd5e8" stroke="#8d9bb6" stroke-width=".8"/></svg></span>
          <span><svg viewBox="0 0 12 12"><path d="M2 2h8v8H2zM2 6h8" fill="#ccd5e8" stroke="#8d9bb6" stroke-width=".8"/></svg></span>
          <span><svg viewBox="0 0 12 12"><path d="M1 1.500h10v9H1z" fill="#ddd" stroke="#444" stroke-width="1.200"/><path d="M1 1h10v3H1z" fill="#3b3b3b"/></svg></span>
          <span><svg viewBox="-1 -1 12 12"><use href="#closer" width="10" height="10"/></svg></span>
        </div>
      </div>
      <div class="canvas">
        <svg viewBox="220 131 819 575" width="819" height="575">
          <defs>
            <linearGradient id="cyl"><stop offset="0" stop-color="#2b3a97"/><stop offset=".1" stop-color="#4058af"/><stop offset=".25" stop-color="#6484c2"/><stop offset=".4" stop-color="#94a8bd"/><stop offset=".51" stop-color="#b0ada3"/><stop offset=".62" stop-color="#c29781"/><stop offset=".76" stop-color="#bf7152"/><stop offset=".87" stop-color="#b04a35"/><stop offset=".95" stop-color="#9c221f"/><stop offset="1" stop-color="#8b0b19"/></linearGradient>
            <linearGradient id="cw" x1="0" y1="1" x2="0" y2="0"><stop offset="0" stop-color="#3b4cc0"/><stop offset=".2" stop-color="#7396f5"/><stop offset=".35" stop-color="#a3c2fe"/><stop offset=".5" stop-color="#dddcdb"/><stop offset=".65" stop-color="#f6bfa5"/><stop offset=".75" stop-color="#f39a7b"/><stop offset=".88" stop-color="#dc5f4b"/><stop offset="1" stop-color="#b40426"/></linearGradient>
          </defs>
          <rect x="593.500" y="382.500" width="72.500" height="72" rx="1" fill="url(#cyl)"/>
          <path d="M594 382.700h71.500M594 454.300h71.500" stroke="#555b73" stroke-opacity=".7"/>
          <path d="M292.500 633V600" stroke="#10c01c" stroke-width="1.300"/><path d="M289.500 602L292.500 594l3 8z" fill="#05d812"/>
          <path d="M293 633.500h31" stroke="#c22832"/><path d="M324 630.500l8 3-8 3.500z" fill="#d90000"/><path d="M324 630.500l2 3-2 3.500z" fill="#700"/>
          <circle cx="292.200" cy="633.500" r="3" fill="#ff0"/>
          <g class="axis"><text x="294" y="601.500">Z</text><text x="293" y="634.500">Y</text><text x="325.500" y="634.500">X</text></g>
          <rect x="968.500" y="509.500" width="10" height="189" fill="url(#cw)"/>
          <path d="M976.500 509.500h7.500M976.500 528.400h7.500M976.500 547.300h7.500M976.500 566.200h7.500M976.500 585.100h7.500M976.500 604h7.500M976.500 622.900h7.500M976.500 641.800h7.500M976.500 660.700h7.500M976.500 679.600h7.500M976.500 698.500h7.500" stroke="#ced0d6" stroke-width=".9"/>
          <g class="ticks"><text x="987" y="512.500" textLength="36.500">1.0e+00</text><text x="986.500" y="531.400">0.9</text><text x="986.500" y="550.300">0.8</text><text x="986.500" y="569.200">0.7</text><text x="986.500" y="588.100">0.6</text><text x="986.500" y="607">0.5</text><text x="986.500" y="625.900">0.4</text><text x="986.500" y="644.800">0.3</text><text x="986.500" y="663.700">0.2</text><text x="986.500" y="682.600">0.1</text><text x="986.500" y="701.500" textLength="37">0.0e+00</text>
          <text transform="translate(1034 618.500) rotate(-90)" textLength="31">Point X</text></g>
        </svg>
      </div>
    </section>
  </div>
  <footer class="status"><span class="abort"><svg viewBox="0 0 6 6"><path d="M1 1l4 4M5 1L1 5" stroke="#d66" stroke-width="1.800"/></svg></span><span class="progress"></span><span class="grip"></span></footer>
</main>
<div class="mark mark-playback"></div>
<div class="mark mark-source"></div>
</body>
</html>
```
FILE: styles.css
```css
* { box-sizing: border-box; }
html, body { margin: 0; height: 100%; }
body { display: flow-root; position: relative; overflow: hidden; background: #f2f2f2; color: #1c1c1c; font: 8px/10px Inter, "Liberation Sans", sans-serif; }
h1, h2, h3 { margin: 0; font-size: inherit; }
i, b { display: block; font-style: normal; }
.paints { position: absolute; width: 0; height: 0; }
.defs { display: none; }
.glyph { font: italic 700 11px Inter, sans-serif; fill: #222; }
.ax { font: 500 7px Inter, sans-serif; fill: #555; }
.deg { font: 700 6.5px Inter, sans-serif; fill: #808080; }
.q { font: 700 9px Inter, sans-serif; fill: #699256; }

.window { display: flex; flex-direction: column; width: 1043px; height: 724px; margin: 1px 0 0 1px; border: solid #b9b9b9; border-width: 0 1px 0 0; border-radius: 4px 4px 0 0; overflow: hidden; background: #ececec; }
.title { display: flex; align-items: center; gap: 5px; flex: none; height: 13px; padding-left: 4.500px; border: 1px solid #b7b7b7; border-bottom-color: #b3b3b3; border-radius: 4px 4px 0 0; background: linear-gradient(#ebebeb, #d8d8d8); }
.title h1 { flex: 1; margin-left: -42px; padding-top: 1px; text-align: center; font-weight: 400; color: #3a3a3a; }
.light { width: 7.300px; height: 7.300px; border-radius: 50%; }
.red { background: #fc5b57; }
.yellow { background: #fdbb2d; }
.green { background: #27c53f; }

.bar { display: flex; align-items: center; flex: none; height: 27px; border-bottom: 1px solid #b3b3b3; border-top: 1px solid #f2f2f2; background: linear-gradient(#ececec, #c9c9c9); }
.ic { flex: none; width: 25.600px; height: 26px; }
.on { background: #bcbcbc; }
.filters .ic { width: 28px; }
.sep { flex: none; width: 4px; height: 16px; background: radial-gradient(circle, #999 .55px, transparent .9px) center / 2px 3px repeat-y; align-self: center; }
.sep.wide { width: 7.500px; background-position: 4px 0; }
.filters .sep { width: 5px; }
.filters .sep.wide { width: 6.500px; }
.time-sep { margin-left: 3px; }
.strong { font-weight: 600; font-size: 8.200px; }
.time-label { margin-left: -3px; width: 24px; }
.combo { display: flex; align-items: center; flex: none; height: 13px; padding-left: 5px; border: 1px solid #ccc; border-top-color: #d6d6d6; border-radius: 2.500px; background: #fff; box-shadow: 0 .5px .5px #9998; }
.knob { align-self: stretch; width: 10.500px; margin: -1px -1px -1px auto; border-radius: 0 2px 2px 0; background: linear-gradient(#cd7ac9, #b040a9); color: #fff; }
.knob::before, .step::before { content: "⌃"; display: block; height: 6px; font: 8px/9px Inter, sans-serif; text-align: center; }
.knob::after, .step::after { content: "⌃"; display: block; height: 6px; font: 8px/9px Inter, sans-serif; text-align: center; transform: scaleY(-1); }
.combo.off { background: #e9e9e9; }
.off .knob { background: none; color: #888; }
.time { width: 56px; }
.frame { width: 8px; height: 11px; margin-left: 4px; text-align: center; background: #fff; outline: .5px solid #bbb; }
.step { width: 6px; height: 12px; margin: 0 2px 0 1px; border-radius: 3px; background: #f7f7f7; color: #555; }
.max { width: 35px; }
.array { width: 84.500px; margin-left: 3px; }
.dot { width: 3px; height: 3px; margin: 0 5.500px 0 3px; border-radius: 1px; background: #d9a72c; }
.comp { width: 48.500px; margin: 0 6px 0 5px; }
.repr { width: 91.500px; margin-left: 2px; }
.repr-sep { margin-left: 5.500px; }
.sep.end { width: 12px; }

.body { display: flex; flex: 1; min-height: 0; }
.side { display: flex; flex-direction: column; width: 215.500px; border-right: 1px solid #b9b9b9; border-left: 1px solid #bbb; padding-top: 1px; }
.dock { display: flex; align-items: center; gap: 2px; flex: none; height: 14px; background: linear-gradient(#ececec, #ddd); border-bottom: 1px solid #b5b5b5; }
.dock svg { width: 9px; height: 9px; }
.dock h2 { flex: 1; margin-left: -22px; text-align: center; font-weight: 500; font-size: 7.200px; padding-left: 22px; color: #333; }
.tree { flex: none; height: 75px; padding-top: 2px; background: #fff; border-bottom: 1px solid #b5b5b5; }
.node { display: flex; align-items: center; height: 13px; }
.eye { width: 9px; height: 8px; margin: 0 3px 0 3px; }
.nic { width: 11px; height: 12px; margin-right: 2px; }
.name { font-size: 8.300px; }
.picked { display: flex; align-items: center; height: 11px; width: 65px; background: #e0c5e2; }
.tabs { display: flex; flex: none; height: 13px; padding-left: 53px; }
.tab { display: grid; place-items: center; width: 54.500px; background: #fff; border-radius: 0 2.500px 2.500px 0; box-shadow: 0 0 1px #777; font-size: 8.100px; }
.tab.active { width: 52px; background: linear-gradient(#ca6bc5, #b040a9); color: #fff; border-radius: 2.500px 0 0 2.500px; }
.dock.second { height: 14px; padding-top: 1px; background: #e6e6e6; }
.actions { display: flex; gap: 2px; flex: none; padding: 9px 0 0 10.500px; }
.btn { display: flex; align-items: center; justify-content: center; flex: none; gap: 4px; width: 51px; height: 13px; background: #fff; border-radius: 2.500px; box-shadow: 0 0 1px #777, 0 .5px 1px #aaa; font-size: 8.100px; }
.btn svg { width: 9px; height: 9px; }
.dim { background: #ededed; color: #a8a8a8; }
.dim svg { opacity: .6; }
.btn.del { width: 54px; gap: 5px; }
.btn.help { width: 30px; color: #689a4f; font-weight: 700; font-size: 10px; }
.search { display: flex; gap: 2px; align-items: center; flex: none; height: 15px; margin: 13px 7px 0 6.500px; }
.field { width: 183px; height: 13px; padding: .5px 0 0 1.500px; background: #fff; border: 1px solid #bbb; color: #777; white-space: nowrap; font-size: 8px; letter-spacing: -.07px; }
.gear { display: grid; place-items: center; width: 15.500px; height: 15px; border: 1px solid #c3c3c3; background: #e4e4e4; }
.gear svg { width: 11px; height: 11px; }

.scroller { display: grid; grid-template: 423px 9px / 192px 8.500px; margin: 8px 0 0 6px; }
.props { overflow: hidden; padding: 1px 0 0 .5px; }
.vbar { padding: 2px 0 0 2px; background: #f8f8f8; }
.vbar i { width: 5px; height: 332px; border-radius: 3px; background: #c1c1c1; }
.hbar { background: #f8f8f8; padding: 2px 0 0 2.500px; }
.hbar i { width: 125.500px; height: 5px; border-radius: 3px; background: #c1c1c1; }
.group { display: flex; gap: 3px; height: 15px; margin-top: 1px; }
.ghead { display: flex; align-items: center; flex: none; width: 177px; padding-left: 9px; border: 1px solid #bbb; background: #e9e9e9; font-weight: 700; font-size: 8px; white-space: nowrap; overflow: hidden; }
.ghead i { flex: none; width: 8px; height: 3px; margin-right: 6.500px; background: #429bc2; border-radius: 1px; }
.gbtn { flex: none; width: 20px; height: 13px; margin-top: 1px; padding-left: 4px; background: #fff; border: 1px solid #ccc; border-radius: 2px; }
.gbtn svg { width: 11px; height: 11px; }
.row { display: flex; align-items: center; width: 260px; height: 13px; white-space: nowrap; }
.check { display: grid; flex: none; width: 8.500px; height: 8.500px; margin: 0 2.500px 0 1px; background: #fff; border-radius: 2px; box-shadow: 0 0 1px #444; }
.ticked { background: #bb55b5; }
.lab { flex: none; width: 73px; font-size: 7.900px; }
.raised { margin-top: -8px; }
.input { flex: 1; height: 12.500px; padding: 1px 0 0 1px; background: #fff; border: 1px solid #c4c4c4; }
.drop, .wbtn { flex: 1; height: 12px; padding: 1px 0 0 5.500px; background: #fff; border-radius: 2.500px; box-shadow: 0 0 1px #777, 0 .5px 1px #aaa; }
.drop.off { background: #ececec; }
.analytic { height: 11px; margin-top: 12px; }
.xamp { margin-top: 3px; }
.yamp { margin-top: 2px; }
.amp { width: 48px; margin-top: -3px; }
.growing { height: 12px; margin-top: 3px; }
.display { margin-top: 9px; }
.reprrow { margin-top: 14px; }
h3 { height: 11px; margin-top: 8px; border-bottom: 1px solid #c4c4c4; font-weight: 700; font-size: 8px; line-height: 10px; }
h3.coloring { margin-top: 9px; }
.colorrow { margin-top: 5px; }
.cvar { width: 115px; margin: 0 6px 0 6.500px; }
.mapbtns { gap: 3px; margin-top: 6px; padding-left: 4px; }
.mapbtns .btn { width: 30px; }
.mapbtns .edit { width: 45px; }
.mapbtns svg { width: 13px; height: 13px; }
h3.styling { margin-top: 10px; }
.slide { margin-top: 4px; }
.slide .lab { margin-top: -5px; }
.slider { width: 99px; height: 2px; margin: 0 9px 0 -1px; background: #b9b9b9; border-radius: 1px; }
.slider i { width: 9.500px; height: 9.500px; margin-top: -4px; background: #fff; border-radius: 50%; box-shadow: 0 0 1.500px #666; }
.slider.full { background: #bd5bb8; }
.full i { margin-left: 90px; }
.scaling { margin-top: 5px; }
hr { height: 1px; margin: 6px 0 0; border: 0; background: #c4c4c4; }
.axes { margin-top: 8px; }
.data-lab { width: 55px; }
.axes-lab { width: 36px; }
.wbtn { padding-left: 108px; }
.wbtn.data { padding-left: 98.500px; }
.labels { height: 20px; margin-top: 6px; }
.labels .lab { width: 70px; }
.view { height: 16px; margin-top: 9px; }
.axes2 { margin-top: 16px; }
.cut { margin-top: 6px; }

.stage { display: flex; flex-direction: column; flex: 1; min-width: 0; padding-left: 1px; }
.layouts { display: flex; flex: none; height: 15px; margin-right: 2px; padding-left: 363px; border-top: 1px solid #b9b9b9; background: linear-gradient(#ebebeb 5px, #e1e1e1 5px); }
.ltab { display: flex; align-items: center; width: 78.500px; height: 13px; padding-left: 2px; color: #fff; background: linear-gradient(#ca6bc5, #b040a9); border-radius: 2px 0 0 2px; font-size: 8.100px; }
.win { width: 10px; height: 10px; margin-right: 9px; }
.x { width: 8.500px; height: 8.500px; margin: 0 4px 0 auto; }
.addtab { display: grid; place-items: center; width: 18.500px; height: 13px; background: #fff; border-radius: 0 2.500px 2.500px 0; box-shadow: 0 0 1px #777; }
.vtools { display: flex; align-items: center; flex: none; height: 19px; padding-right: 2px; }
.vset { display: flex; align-items: center; height: 18px; width: 425px; background: linear-gradient(#ebebeb, #cdcdcd); }
.vset svg, .three { flex: none; width: 17.100px; height: 17px; }
.three { font: 700 6.500px/17px Inter, sans-serif; text-align: center; color: #706b5c; }
.vset .sep { width: 3.600px; }
.vname { margin: 0 6.500px 0 auto; font-weight: 700; font-size: 8.100px; text-decoration: underline; }
.vbtns { display: flex; gap: 2px; }
.vbtns span { display: grid; place-items: center; width: 16px; height: 17px; border: 1px solid #c5c5c5; background: #e8e8e8; }
.vbtns svg { width: 12px; height: 12px; }
.canvas { flex: none; width: 823px; height: 579px; border: 2px solid #4b93e5; border-right-color: #0a69ef; background: #52576e; overflow: hidden; }
.canvas svg { display: block; }
.axis text { font: 10.500px Lato, sans-serif; fill: #fff; }
.ticks text { font: 11px Lato, sans-serif; fill: #e9e9ee; }

.status { display: flex; align-items: flex-end; flex: none; gap: 1.500px; height: 15px; padding-left: 518px; border-top: 1px solid #aaa; border-left: 1px solid #bbb; background: linear-gradient(#e8e8e8, #bcbcbc); }
.abort { display: grid; place-items: center; width: 13px; height: 13px; border: 1px solid #c0c0c0; background: #e0e0e0; }
.abort svg { width: 5px; height: 5px; }
.progress { width: 501px; height: 13px; border: 1px solid #bbb; border-right-color: #aaa; }
.grip { flex: 1; height: 13px; border-left: 1px solid #ddd; background: #d5d5d5; }

.mark { position: absolute; border: 2px solid #f00; }
.mark-playback { left: 344px; top: 12px; width: 169px; height: 33px; }
.mark-source { left: 0; top: 286px; width: 209px; height: 89px; border-width: 7px; }
```
